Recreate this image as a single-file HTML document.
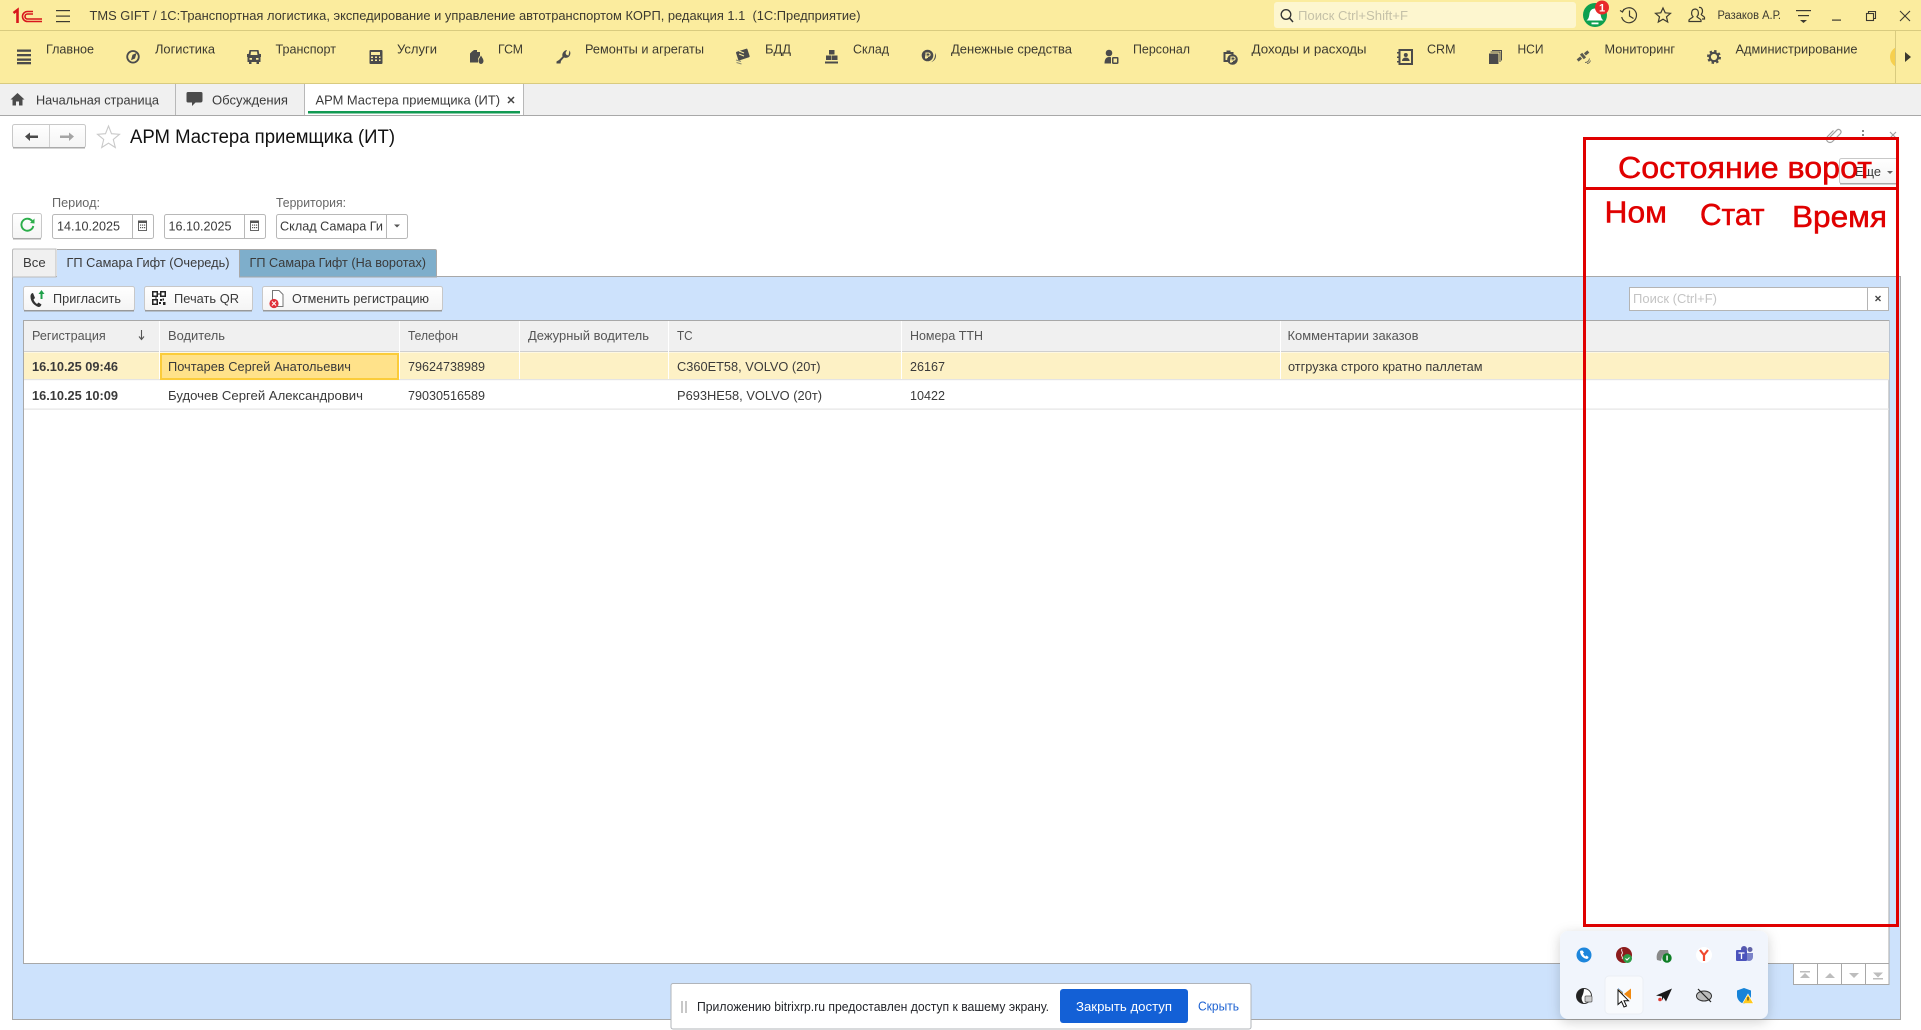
<!DOCTYPE html>
<html lang="ru"><head><meta charset="utf-8"><title>TMS GIFT</title>
<style>
html,body{margin:0;padding:0;background:#fff;width:1921px;height:1030px;overflow:hidden}
svg{display:block}
text{font-family:"Liberation Sans",Arial,sans-serif;font-size:12.5px;fill:#3a3a3a;white-space:pre}
.m{font-size:13px;fill:#3c3a30}
.i{fill:#4b4b4b}
.s{fill:none;stroke:#4b4b4b}
.b{fill:url(#g);stroke:#c8c8c8}
.l{fill:#8c8c8c}
.r{fill:#e00000;font-size:31px;stroke:#e00000;stroke-width:.5px}
</style></head><body>
<svg width="1921" height="1030" viewBox="0 0 1921 1030" xmlns="http://www.w3.org/2000/svg">
<defs>
<linearGradient id="g" x1="0" y1="0" x2="0" y2="1"><stop offset="0" stop-color="#fff"/><stop offset="1" stop-color="#f4f4f4"/></linearGradient>
<filter id="sh" x="-20%" y="-20%" width="140%" height="150%"><feDropShadow dx="0" dy="3" stdDeviation="6" flood-color="#000" flood-opacity=".18"/></filter>
</defs>

<!-- title bar -->
<rect width="1921" height="84" fill="#fbec9e"/>
<rect y="30" width="1921" height="1" fill="#d9cb7f"/>
<rect y="83" width="1921" height="1" fill="#d9cb7f"/>
<!-- 1C logo -->
<g fill="none" stroke="#d8161c">
<path d="M13.5 13l4-3v13" stroke-width="2.6"/>
<path d="M33 11.5h-5.5a5 5 0 0 0 0 10H42" stroke-width="1.6"/>
<path d="M33 14h-5.5a2.4 2.4 0 0 0 0 5H42" stroke-width="1.6"/>
</g>
<g fill="#3c3a30"><rect x="56" y="10" width="14" height="1.2"/><rect x="56" y="15.5" width="14" height="1.2"/><rect x="56" y="21" width="14" height="1.2"/></g>
<text x="89.500" y="20" class="m" textLength="771" lengthAdjust="spacingAndGlyphs">TMS GIFT / 1С:Транспортная логистика, экспедирование и управление автотранспортом КОРП, редакция 1.1  (1С:Предприятие)</text>

<!-- top right -->
<rect x="1274" y="2" width="302" height="26" rx="3" fill="#fdf6cf"/>
<circle cx="1286" cy="14.500" r="4.800" fill="none" stroke="#333" stroke-width="1.300"/><path d="M1289.500 18l3.500 4" stroke="#333" stroke-width="1.500"/>
<text x="1298" y="20" font-size="12.5" style="fill:#c5c1a8" textLength="110" lengthAdjust="spacingAndGlyphs">Поиск Ctrl+Shift+F</text>
<circle cx="1595" cy="15" r="12" fill="#0ea04f"/>
<path d="M1586.500 20.500c2.500-2 2.500-4 3-7 .5-3 2.500-5 5.500-5s5 2 5.500 5c.5 3 .5 5 3 7z" fill="#fff"/><path d="M1591.500 22.500h7v1.800h-7z" fill="#fff"/>
<circle cx="1602" cy="7.500" r="7" fill="#e8282a"/>
<text x="1602" y="11.500" text-anchor="middle" style="fill:#fff;font-weight:bold;font-size:11px">1</text>
<g fill="none" stroke="#3c3a30" stroke-width="1.200">
<path d="M1622.500 11.500a7.500 7.500 0 1 1-.8 5.500"/><path d="M1620 10.500l2.500 1.500 1.500-3"/><path d="M1629.500 10.500v5.500l4 2.500"/>
<path d="M1663 8l2.200 4.800 5.300.5-4 3.500 1.200 5.200-4.700-2.800-4.700 2.800 1.200-5.200-4-3.500 5.300-.5z"/>
<path d="M1695 9c2.200 0 3.400 1.800 3.400 4 0 1.600-.7 3-1.500 3.600 0 1 2.600 1.400 4.100 3.400v1.500h-12V20c1.500-2 4.100-2.400 4.100-3.400-.8-.6-1.500-2-1.500-3.600 0-2.200 1.200-4 3.900-4z"/>
<path d="M1699 7.500c2.200-.5 3.500 1.300 3.500 3.500 0 1.600-.7 2.800-1.300 3.400 0 .8 2 1.300 3.300 3v1.600h-2.500"/>
</g>
<text x="1717.500" y="19" style="font-size:11.5px;fill:#3c3a30" textLength="63.500" lengthAdjust="spacingAndGlyphs">Разаков А.Р.</text>
<g fill="#3c3a30"><rect x="1796" y="10" width="15" height="1.200"/><rect x="1798" y="15" width="11" height="1.200"/><path d="M1800 20h7l-3.500 3z"/></g>
<rect x="1832" y="19.500" width="9" height="1.200" fill="#3c3a30"/>
<g fill="none" stroke="#3c3a30" stroke-width="1.100"><rect x="1866.500" y="13.500" width="7" height="7"/><path d="M1868.500 13.500v-2h7v7h-2"/><path d="M1900 11l10 10m0-10l-10 10"/></g>

<!-- menu -->
<g class="i">
<rect x="17" y="49.500" width="14" height="2.300"/><rect x="17" y="54" width="14" height="2.300"/><rect x="17" y="58.500" width="14" height="2.300"/><rect x="17" y="62" width="14" height="2.300"/>
<circle cx="133" cy="56.800" r="5.800" style="fill:none;stroke:#4b4b4b;stroke-width:1.800"/><path d="M136.500 53l-1.500 5.500-4 1.800 1.500-5.500z"/>
<path fill-rule="evenodd" d="M249.500 50h9l.8 4H261v3h-.5v5h-1.500v2h-2.500v-2h-5v2H249v-2h-1.500v-5h-.5v-3h1.700zM251 51.500l-.5 3.500h7l-.5-3.500zM249.500 58v1.800h2.500V58zM256 58v1.800h2.500V58z"/>
<rect x="369.500" y="50" width="13" height="14" rx="1"/>
<path d="M474 50l-2 1.500-2 2V62.500H478v-3c0-1.500 1.500-3 2-4V52h-3v-2z"/><path d="M481 55.500c1 2 2.500 3.500 2.500 5.500a2.500 3 0 0 1-5 0c0-2 1.500-3.500 2.500-5.500z"/>
<path d="M569.500 50.500c1.500 2 1 5-1 6.500-1.500 1-3 1-4.500.5l-3 3.500-.5 2.500H556.500v-2l2.500-1.500 3.500-3.500c-.5-2 0-4 2-5.500.5-.5 1.500-1 2.500-1l-1.500 3 1 2 2 .5z"/>
<g transform="rotate(-18 743 55)"><rect x="737" y="50" width="12" height="9" rx="1"/></g>
<rect x="829" y="50" width="5.500" height="4.500"/><rect x="826" y="55.500" width="5.500" height="4.500"/><rect x="832" y="55.500" width="5.500" height="4.500"/><rect x="825" y="61.500" width="13" height="2"/>
<circle cx="927.500" cy="55.500" r="5.800"/><path d="M935 53c2 3 1 8-5 9.500 3.500-1 5.500-5 5-9.500z"/>
<circle cx="1109" cy="53" r="3.300"/><path d="M1104.500 63.500c0-4 1.500-6.500 4.500-6.500 1 0 1.500 0 2 .3V63.500z"/><rect x="1112" y="57" width="6.500" height="7" rx="1.200"/>
<path d="M1223.500 52h3v-1.500h4V52h3v6h-2v-4h-6v6h3v2h-5z"/><circle cx="1232.500" cy="59.500" r="5.300"/>
<path fill-rule="evenodd" d="M1398.500 49h14.500v16h-14.500v-2.500H1397V61h1.500v-3H1397v-1.500h1.500v-3H1397V52h1.500zM1400.500 51v12h10.500V51z"/><circle cx="1405.800" cy="55" r="2"/><path d="M1402 61c0-2 1.500-3.500 3.800-3.500s3.800 1.500 3.800 3.500z"/>
<rect x="1489" y="53.500" width="9.500" height="10.500"/><path d="M1490.500 52h9.500v10" style="fill:none;stroke:#4b4b4b"/><path d="M1492 50.500h9.500v10" style="fill:none;stroke:#4b4b4b"/>
<g transform="rotate(-40 1583 56)" style="fill:#5a5a50"><rect x="1581.500" y="53" width="3" height="6"/><rect x="1576" y="54.500" width="4.500" height="3"/><rect x="1585.500" y="54.500" width="4.500" height="3"/></g>
<path d="M1585 62.500c2.500 0 4-1.500 4.500-4M1587 63.500c2 0 3-1.500 3.500-3" style="fill:none;stroke:#6c6c5c;stroke-width:.9"/>
<circle cx="1714" cy="57" r="4.200" style="fill:none;stroke:#4b4b4b;stroke-width:2.200"/>
<circle cx="1714" cy="57" r="6" style="fill:none;stroke:#4b4b4b;stroke-width:2;stroke-dasharray:2.4 2.31"/>
</g>
<g fill="#fbec9e">
<rect x="371" y="52" width="9" height="3"/><rect x="371" y="56.500" width="2" height="1.500"/><rect x="375" y="56.500" width="2" height="1.500"/><rect x="379" y="56.500" width="1.500" height="1.500"/><rect x="371" y="59.500" width="2" height="1.500"/><rect x="375" y="59.500" width="2" height="1.500"/><rect x="379" y="59.500" width="1.500" height="1.500"/>
<rect x="1113.500" y="58.500" width="3.500" height="4"/>
</g>
<g stroke="#fbec9e" stroke-width="1.100" fill="none"><path d="M926 59v-6h2.500a1.600 1.600 0 0 1 0 3.200H925M925 57.500h3"/><path d="M1231 63v-6h2.500a1.600 1.600 0 0 1 0 3.200H1230M1230 61.500h3"/><path d="M739 51l5 2M739 54l5 2"/></g>
<path d="M736 60l5 1.500M736.500 62.500l5 1.500" stroke="#8a8a70" stroke-width="1.100"/>
<g class="m">
<text class="m" x="46" y="53.500" textLength="48" lengthAdjust="spacingAndGlyphs">Главное</text>
<text class="m" x="155" y="53.500" textLength="60" lengthAdjust="spacingAndGlyphs">Логистика</text>
<text class="m" x="275.500" y="53.500" textLength="60.500" lengthAdjust="spacingAndGlyphs">Транспорт</text>
<text class="m" x="397" y="53.500" textLength="40" lengthAdjust="spacingAndGlyphs">Услуги</text>
<text class="m" x="498" y="53.500" textLength="25" lengthAdjust="spacingAndGlyphs">ГСМ</text>
<text class="m" x="585" y="53.500" textLength="119" lengthAdjust="spacingAndGlyphs">Ремонты и агрегаты</text>
<text class="m" x="765" y="53.500" textLength="26" lengthAdjust="spacingAndGlyphs">БДД</text>
<text class="m" x="853" y="53.500" textLength="36" lengthAdjust="spacingAndGlyphs">Склад</text>
<text class="m" x="951" y="53.500" textLength="121" lengthAdjust="spacingAndGlyphs">Денежные средства</text>
<text class="m" x="1133" y="53.500" textLength="57" lengthAdjust="spacingAndGlyphs">Персонал</text>
<text class="m" x="1251.500" y="53.500" textLength="115" lengthAdjust="spacingAndGlyphs">Доходы и расходы</text>
<text class="m" x="1427" y="53.500" textLength="28.500" lengthAdjust="spacingAndGlyphs">CRM</text>
<text class="m" x="1517.500" y="53.500" textLength="26" lengthAdjust="spacingAndGlyphs">НСИ</text>
<text class="m" x="1604.500" y="53.500" textLength="70.500" lengthAdjust="spacingAndGlyphs">Мониторинг</text>
<text class="m" x="1735.500" y="53.500" textLength="122" lengthAdjust="spacingAndGlyphs">Администрирование</text>
</g>
<circle cx="1901" cy="57" r="11" fill="#f6cf4e"/><rect x="1895" y="31" width="26" height="52" fill="#fbec9e"/>
<rect x="1895" y="31" width="1" height="52" fill="#d9cb7f"/>
<path d="M1905 52l6 5-6 5z" fill="#3c3a30"/>

<!-- open tabs -->
<rect y="84" width="1921" height="31" fill="#f0f0f0"/>
<rect y="115" width="1921" height="1" fill="#a8a8a8"/>
<rect x="305" y="84" width="218" height="31" fill="#fff"/>
<rect x="175" y="84" width="1" height="31" fill="#b8b8b8"/><rect x="304" y="84" width="1" height="31" fill="#b8b8b8"/><rect x="523" y="84" width="1" height="31" fill="#b8b8b8"/>
<rect x="308" y="111" width="212" height="2.500" fill="#119a53"/>
<path d="M17.500 93l-7 6.500h2v6h3.500v-4h3v4h3.500v-6h2z" class="i"/>
<path d="M188 92h13a1.500 1.500 0 0 1 1.500 1.500v7a2 2 0 0 1-2 2h-5l-3.500 3.500v-3.500h-4a1.500 1.500 0 0 1-1.500-1.500v-7.500a1.500 1.500 0 0 1 1.500-1.500z" class="i"/>
<text x="36" y="104.500" textLength="123" lengthAdjust="spacingAndGlyphs">Начальная страница</text>
<text x="212" y="104.500" textLength="76" lengthAdjust="spacingAndGlyphs">Обсуждения</text>
<text x="315.500" y="104.500" textLength="184.500" lengthAdjust="spacingAndGlyphs">АРМ Мастера приемщика (ИТ)</text>
<path d="M508 97l6 6m0-6l-6 6" stroke="#444" stroke-width="1.500"/>

<!-- form header -->
<rect x="12.500" y="124.500" width="73" height="23" rx="2" class="b"/><rect x="13" y="147" width="72" height="1.500" fill="#aaa"/>
<rect x="49" y="125" width="1" height="22" fill="#d0d0d0"/>
<path d="M25 136.500l5-4v3h8v2.500h-8v3z" fill="#4a4a4a"/><path d="M74 136.500l-5-4v3h-9v2.500h9v3z" fill="#a5a5a5"/>
<path d="M108.500 126l3 7.700 8 .6-6.200 5.200 2 8-6.800-4.300-6.800 4.300 2-8-6.200-5.200 8-.6z" fill="#fff" stroke="#c9c9c9" stroke-width="1.100"/>
<text x="130" y="143" style="font-size:19px;fill:#111" textLength="265" lengthAdjust="spacingAndGlyphs">АРМ Мастера приемщика (ИТ)</text>
<g fill="none" stroke="#a0a0a0" stroke-width="1.200"><path d="M1829 138l8-8a2.500 2.500 0 0 1 3.500 3.500l-8 8a3.500 3.500 0 0 1-5-5l6-6"/><path d="M1890 132l6 6m0-6l-6 6"/></g>
<g fill="#888"><rect x="1862" y="130" width="2" height="2"/><rect x="1862" y="134" width="2" height="2"/><rect x="1862" y="138" width="2" height="2"/></g>
<rect x="1839.500" y="158.500" width="58" height="25" rx="2" class="b"/><rect x="1840" y="183" width="57" height="1.500" fill="#aaa"/>
<text x="1855" y="176" textLength="26" lengthAdjust="spacingAndGlyphs">Еще</text><path d="M1887 171h6l-3 3z" fill="#666"/>

<!-- filters -->
<text x="52" y="207" class="l" style="fill:#666" textLength="48" lengthAdjust="spacingAndGlyphs">Период:</text>
<text x="276" y="207" style="fill:#666" textLength="70" lengthAdjust="spacingAndGlyphs">Территория:</text>
<rect x="12.500" y="213.500" width="29" height="25" rx="2" class="b"/><rect x="13" y="238" width="28" height="1.500" fill="#aaa"/>
<path d="M32.500 221.500a6 6 0 1 0 .8 4.500" fill="none" stroke="#2bae4a" stroke-width="1.900"/><path d="M30 223l4.500.5v-5z" fill="#2bae4a"/>
<g fill="#fff" stroke="#b8b8b8"><rect x="52.500" y="214.500" width="101" height="24" rx="2"/><rect x="164.500" y="214.500" width="101" height="24" rx="2"/><rect x="276.500" y="214.500" width="131" height="24" rx="2"/></g>
<g fill="#b8b8b8"><rect x="132" y="215" width="1" height="23"/><rect x="244" y="215" width="1" height="23"/><rect x="386" y="215" width="1" height="23"/></g>
<text x="57" y="230.500" textLength="63" lengthAdjust="spacingAndGlyphs">14.10.2025</text>
<text x="168.500" y="230.500" textLength="63" lengthAdjust="spacingAndGlyphs">16.10.2025</text>
<text x="280" y="230.500" textLength="103" lengthAdjust="spacingAndGlyphs">Склад Самара Ги</text>
<g fill="none" stroke="#555" stroke-width=".9"><rect x="138.500" y="222" width="8" height="8.500"/><rect x="250.500" y="222" width="8" height="8.500"/></g>
<g fill="#555"><rect x="138" y="220.500" width="9" height="2.500"/><rect x="250" y="220.500" width="9" height="2.500"/><rect x="140" y="224.500" width="1.200" height="1.200"/><rect x="142" y="224.500" width="1.200" height="1.200"/><rect x="144" y="224.500" width="1.200" height="1.200"/><rect x="140" y="227" width="1.200" height="1.200"/><rect x="142" y="227" width="1.200" height="1.200"/><rect x="144" y="227" width="1.200" height="1.200"/><rect x="252" y="224.500" width="1.200" height="1.200"/><rect x="254" y="224.500" width="1.200" height="1.200"/><rect x="256" y="224.500" width="1.200" height="1.200"/><rect x="252" y="227" width="1.200" height="1.200"/><rect x="254" y="227" width="1.200" height="1.200"/><rect x="256" y="227" width="1.200" height="1.200"/><path d="M394 224.500h6l-3 3z"/></g>

<!-- tab panel -->
<rect x="12.500" y="276.500" width="1888" height="743" fill="#cde2fc" stroke="#a8a8a8"/>
<path d="M12.500 277V250.500a1.500 1.500 0 0 1 1.500-1.500H56v28z" fill="#f0f0f0" stroke="#bcbcbc"/>
<path d="M57 277.500V249.500H239v27.500z" fill="#cde2fc"/><rect x="57" y="249" width="182" height="1" fill="#a8a8a8"/>
<path d="M239.500 277V249.500H435a1.500 1.500 0 0 1 1.500 1.500V277z" fill="#7eaecb" stroke="#a8a8a8"/>
<text x="23" y="267" textLength="22.700" lengthAdjust="spacingAndGlyphs">Все</text>
<text x="66.500" y="267" textLength="163" lengthAdjust="spacingAndGlyphs">ГП Самара Гифт (Очередь)</text>
<text x="249.500" y="267" textLength="176.500" lengthAdjust="spacingAndGlyphs">ГП Самара Гифт (На воротах)</text>

<!-- buttons -->
<g><rect x="23.500" y="286.500" width="111" height="24" rx="2" class="b"/><rect x="24" y="310" width="110" height="1.500" fill="#999"/>
<rect x="144.500" y="286.500" width="108" height="24" rx="2" class="b"/><rect x="145" y="310" width="107" height="1.500" fill="#999"/>
<rect x="262.500" y="286.500" width="180" height="24" rx="2" class="b"/><rect x="263" y="310" width="179" height="1.500" fill="#999"/></g>
<path d="M33 293c-1.500 0-2.500 1.500-2.500 3.500 0 5 3.500 9 8 10.500 1.500 0 2.500-1 3-2.500l-3-2-1.500 1.500c-1.500-1-3-3-3.500-4.500l1.500-1.500z" fill="#333"/>
<path d="M41.500 290l3 4h-2v5h-2v-5h-2z" fill="#1fa04a"/>
<g fill="#222"><rect x="152" y="291" width="6" height="6"/><rect x="160" y="291" width="6" height="6"/><rect x="152" y="299" width="6" height="6"/><rect x="160" y="299" width="2" height="2"/><rect x="163" y="302" width="2.500" height="3"/><rect x="159" y="302" width="2" height="2"/><rect x="162.500" y="298.500" width="1.500" height="2"/><rect x="155" y="297.500" width="2" height="1"/><rect x="158.500" y="293" width="1" height="2"/></g>
<g fill="#fff"><rect x="153.500" y="292.500" width="3" height="3"/><rect x="161.500" y="292.500" width="3" height="3"/><rect x="153.500" y="300.500" width="3" height="3"/></g>
<path d="M272.500 290.500h6.500l4 4v12h-10.500z" fill="#fff" stroke="#777"/>
<circle cx="274" cy="303.500" r="4.600" fill="#e0313a"/><path d="M272 301.500l4 4m0-4l-4 4" stroke="#fff" stroke-width="1.100"/>
<text x="53" y="303" textLength="68" lengthAdjust="spacingAndGlyphs">Пригласить</text>
<text x="174" y="303" textLength="65" lengthAdjust="spacingAndGlyphs">Печать QR</text>
<text x="292" y="303" textLength="137" lengthAdjust="spacingAndGlyphs">Отменить регистрацию</text>
<rect x="1629.500" y="287.500" width="238" height="23" fill="#fff" stroke="#b4b4b4"/>
<rect x="1867.500" y="287.500" width="21" height="23" fill="#fff" stroke="#b4b4b4"/>
<text x="1633" y="303" style="fill:#c4c4c4" textLength="84" lengthAdjust="spacingAndGlyphs">Поиск (Ctrl+F)</text>
<path d="M1875.500 296l5 5m0-5l-5 5" stroke="#444" stroke-width="1.400"/>

<!-- table -->
<rect x="23.500" y="320.500" width="1865.500" height="643" fill="#fff" stroke="#a8a8a8"/>
<rect x="24" y="321" width="1865" height="30.500" fill="#f0f0f0"/>
<rect x="24" y="351" width="1865" height="1" fill="#cfcfcf"/>
<rect x="24" y="352.500" width="1865" height="26.500" fill="#fdf1c5"/>
<rect x="24" y="379" width="1865" height="1.200" fill="#e4e4e4"/>
<rect x="24" y="408.500" width="1865" height="1.200" fill="#e4e4e4"/>
<g fill="#fff"><rect x="159" y="321" width="1" height="58"/><rect x="399" y="321" width="1" height="58"/><rect x="519" y="321" width="1" height="58"/><rect x="668" y="321" width="1" height="58"/><rect x="901" y="321" width="1" height="58"/><rect x="1280" y="321" width="1" height="58"/></g>
<rect x="161" y="354" width="237" height="25" fill="#ffe28a" stroke="#fbcc3a" stroke-width="2"/>
<g style="fill:#555">
<text style="fill:#555" x="32" y="340" textLength="73.700" lengthAdjust="spacingAndGlyphs">Регистрация</text>
<text style="fill:#555" x="168" y="340" textLength="57" lengthAdjust="spacingAndGlyphs">Водитель</text>
<text style="fill:#555" x="408" y="340" textLength="50" lengthAdjust="spacingAndGlyphs">Телефон</text>
<text style="fill:#555" x="528" y="340" textLength="121" lengthAdjust="spacingAndGlyphs">Дежурный водитель</text>
<text style="fill:#555" x="677" y="340" textLength="15.600" lengthAdjust="spacingAndGlyphs">ТС</text>
<text style="fill:#555" x="910" y="340" textLength="73" lengthAdjust="spacingAndGlyphs">Номера ТТН</text>
<text style="fill:#555" x="1287.500" y="340" textLength="131" lengthAdjust="spacingAndGlyphs">Комментарии заказов</text>
</g>
<path d="M141.500 330v9m-2.500-2.500l2.500 3 2.500-3" stroke="#555" fill="none" stroke-width="1.100"/>
<text x="32" y="371" style="font-weight:bold" textLength="86" lengthAdjust="spacingAndGlyphs">16.10.25 09:46</text>
<text x="168" y="371" textLength="183" lengthAdjust="spacingAndGlyphs">Почтарев Сергей Анатольевич</text>
<text x="408" y="371" textLength="77" lengthAdjust="spacingAndGlyphs">79624738989</text>
<text x="677" y="371" textLength="143.500" lengthAdjust="spacingAndGlyphs">С360ЕТ58, VOLVO (20т)</text>
<text x="910" y="371" textLength="35" lengthAdjust="spacingAndGlyphs">26167</text>
<text x="1288" y="371" textLength="194.500" lengthAdjust="spacingAndGlyphs">отгрузка строго кратно паллетам</text>
<text x="32" y="400" style="font-weight:bold" textLength="86" lengthAdjust="spacingAndGlyphs">16.10.25 10:09</text>
<text x="168" y="400" textLength="195" lengthAdjust="spacingAndGlyphs">Будочев Сергей Александрович</text>
<text x="408" y="400" textLength="77" lengthAdjust="spacingAndGlyphs">79030516589</text>
<text x="677" y="400" textLength="145" lengthAdjust="spacingAndGlyphs">Р693НЕ58, VOLVO (20т)</text>
<text x="910" y="400" textLength="35" lengthAdjust="spacingAndGlyphs">10422</text>

<!-- pager -->
<rect x="1793.500" y="963.500" width="95.500" height="21" fill="#fff" stroke="#a8a8a8"/>
<g fill="#a8a8a8"><rect x="1817" y="964" width="1" height="21"/><rect x="1841" y="964" width="1" height="21"/><rect x="1865" y="964" width="1" height="21"/></g>
<g fill="#bdbdbd"><rect x="1800" y="971" width="10" height="1.500"/><path d="M1800 978l5-5 5 5z"/><path d="M1825 978l5-5 5 5z"/><path d="M1849 973l5 5 5-5z"/><path d="M1873 972.500l5 5 5-5z"/><rect x="1873" y="978" width="10" height="1.500"/></g>

<!-- red annotation -->
<g fill="none" stroke="#e00000" stroke-width="3"><path d="M1584.500 138.500h313v787h-313z"/></g>
<rect x="1584" y="187" width="312" height="3" fill="#e00000"/>
<text x="1618" y="178" class="r" textLength="254" lengthAdjust="spacingAndGlyphs">Состояние ворот</text>
<text x="1604.500" y="222.500" class="r" textLength="62.500" lengthAdjust="spacingAndGlyphs">Ном</text>
<text x="1700" y="225" class="r" textLength="64.500" lengthAdjust="spacingAndGlyphs">Стат</text>
<text x="1792" y="227" class="r" textLength="95" lengthAdjust="spacingAndGlyphs">Время</text>

<!-- tray flyout -->
<rect x="1560" y="931" width="208" height="88" rx="8" fill="#f1f5fc" filter="url(#sh)"/>
<rect x="1605" y="976" width="38" height="38" rx="4" fill="#f8fafd" stroke="#ebeff5"/>
<circle cx="1584" cy="955" r="7.500" fill="#1d86dc"/><path d="M1580 951c0 4 3 7.500 7 8 1-.5 1.500-1 1.500-2l-2-1.500-1 1c-1-.5-2-2-2.500-3l1-1-1.500-2c-1 0-2 .2-2.500.5z" fill="#fff"/>
<circle cx="1624" cy="955" r="8" fill="#8c1c1c"/><circle cx="1627.500" cy="958.500" r="4.500" fill="#2d9c46"/><path d="M1625.500 958.500l1.500 1.500 2.500-2.500" stroke="#fff" fill="none"/><path d="M1622 949c-2 2 2 3 0 5s2 3 0 5" stroke="#e8d0d0" fill="none"/>
<path d="M1657 960c-1-4 0-8 3-10h8l1 5c-3-2-6-1-7 2l-1 4z" fill="#8a8a8a"/><circle cx="1667" cy="958" r="4.700" fill="#0e7e25"/><rect x="1666.300" y="955.500" width="1.500" height="5" fill="#fff"/>
<circle cx="1704" cy="955" r="8" fill="#fff"/><path d="M1700 950l4 5 4-5M1704 955v6" stroke="#f0492e" stroke-width="2.200" fill="none"/>
<circle cx="1750" cy="949.500" r="2.500" fill="#6264a7"/><path d="M1745 953h8v4a4 4 0 0 1-8 0z" fill="#7b83c9"/><circle cx="1744" cy="949" r="3" fill="#5558af"/><rect x="1736" y="950" width="11" height="11" rx="1" fill="#4b53bc"/><path d="M1738.500 953h6M1741.500 953v6" stroke="#fff" stroke-width="1.300"/>
<circle cx="1584" cy="996" r="7.500" fill="#fff" stroke="#333"/><path d="M1584 988.500a7.500 7.500 0 0 0 0 15c-2-2-3-5-2-7s2-5 2-8z" fill="#222"/><rect x="1585" y="996" width="7" height="6" rx="1" fill="#ccc" stroke="#555" stroke-width=".7"/>
<path d="M1618 988l5 4v7l-5-3.500z" fill="#3a7fd0" opacity=".8"/><path d="M1631 988.500l-7 5.500 7 5.500z" fill="#f08a12"/><path d="M1618 989l5 4-5 4z" fill="#f2a536"/>
<path d="M1656 995.500l16-7-6 13-2.500-4-1.500 3v-4z" fill="#1a1a1a"/><circle cx="1660" cy="999.500" r="1.800" fill="#e23a32"/>
<ellipse cx="1704" cy="996" rx="7.500" ry="5" fill="#bbb" stroke="#333"/><path d="M1698 989l13 13" stroke="#222" stroke-width="1.200"/>
<path d="M1744 988l7 2.500v5c0 4-3 7-7 8.500-4-1.500-7-4.500-7-8.500v-5z" fill="#1683d8"/><path d="M1748 994l5.500 9.500h-11z" fill="#ffc91e" stroke="#fff" stroke-width=".6"/><rect x="1747.500" y="997" width="1" height="3.500" fill="#222"/>
<path d="M1618 990v14.500l3.500-3 2.500 5.500 2.500-1-2.500-5.300h4.500z" fill="#fff" stroke="#111"/>

<!-- screen-share bar -->
<rect x="671" y="983.500" width="580" height="45.500" rx="2" fill="#fff" stroke="#b0b4ba"/>
<rect x="681" y="1001" width="2" height="12" fill="#c8c8c8"/><rect x="685" y="1001" width="2" height="12" fill="#c8c8c8"/>
<text x="697" y="1011" style="font-size:12.500px;fill:#24262b" textLength="352" lengthAdjust="spacingAndGlyphs">Приложению bitrixrp.ru предоставлен доступ к вашему экрану.</text>
<rect x="1060" y="989" width="128" height="34" rx="3" fill="#1360d6"/>
<text x="1076" y="1011" style="font-size:13px;fill:#fff" textLength="96" lengthAdjust="spacingAndGlyphs">Закрыть доступ</text>
<text x="1198" y="1010.500" style="font-size:12.500px;fill:#1d62d2" textLength="41" lengthAdjust="spacingAndGlyphs">Скрыть</text>
</svg>
</body></html>
